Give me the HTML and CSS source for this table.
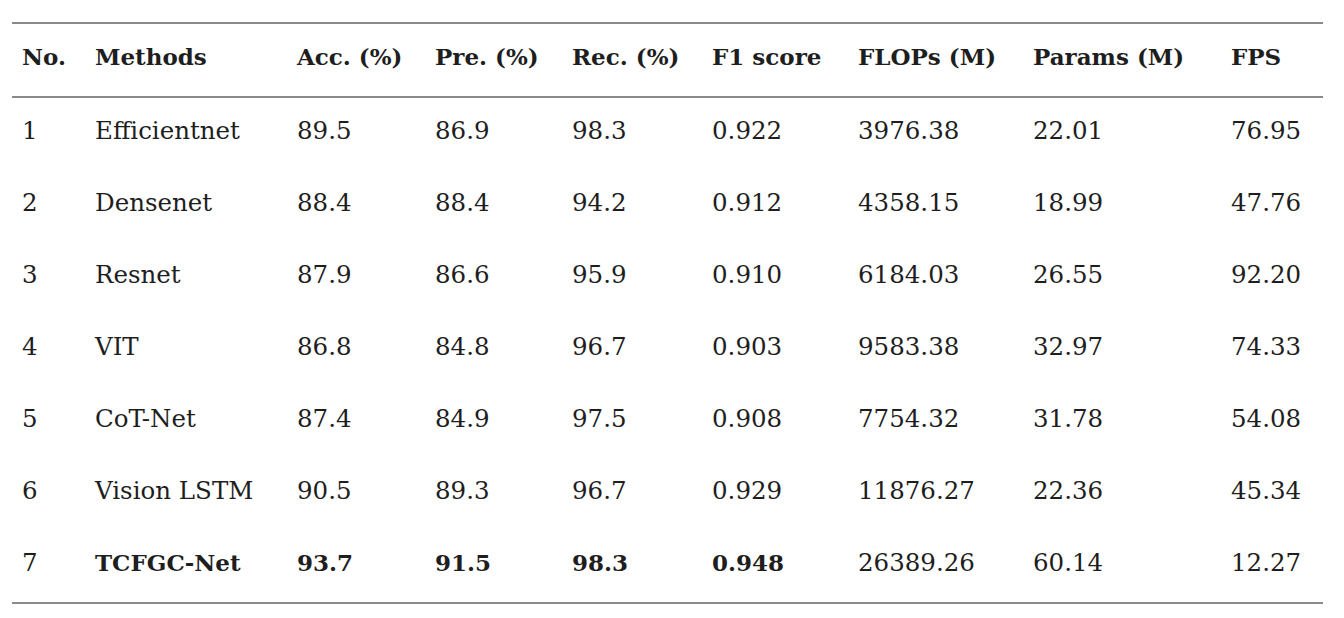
FILE: index.html
```html
<!DOCTYPE html>
<html>
<head>
<meta charset="utf-8">
<link rel="stylesheet" href="styles.css">
</head>
<body>
<table class="results">
  <colgroup>
    <col class="c1"><col class="c2"><col class="c3"><col class="c4"><col class="c5"><col class="c6"><col class="c7"><col class="c8"><col class="c9">
  </colgroup>
  <thead>
    <tr><th>No.</th><th>Methods</th><th>Acc. (%)</th><th>Pre. (%)</th><th>Rec. (%)</th><th>F1 score</th><th>FLOPs (M)</th><th>Params (M)</th><th>FPS</th></tr>
  </thead>
  <tbody>
    <tr><td>1</td><td>Efficientnet</td><td>89.5</td><td>86.9</td><td>98.3</td><td>0.922</td><td>3976.38</td><td>22.01</td><td>76.95</td></tr>
    <tr><td>2</td><td>Densenet</td><td>88.4</td><td>88.4</td><td>94.2</td><td>0.912</td><td>4358.15</td><td>18.99</td><td>47.76</td></tr>
    <tr><td>3</td><td>Resnet</td><td>87.9</td><td>86.6</td><td>95.9</td><td>0.910</td><td>6184.03</td><td>26.55</td><td>92.20</td></tr>
    <tr><td>4</td><td>VIT</td><td>86.8</td><td>84.8</td><td>96.7</td><td>0.903</td><td>9583.38</td><td>32.97</td><td>74.33</td></tr>
    <tr><td>5</td><td>CoT-Net</td><td>87.4</td><td>84.9</td><td>97.5</td><td>0.908</td><td>7754.32</td><td>31.78</td><td>54.08</td></tr>
    <tr><td>6</td><td>Vision LSTM</td><td>90.5</td><td>89.3</td><td>96.7</td><td>0.929</td><td>11876.27</td><td>22.36</td><td>45.34</td></tr>
    <tr><td>7</td><td class="b">TCFGC-Net</td><td class="b">93.7</td><td class="b">91.5</td><td class="b">98.3</td><td class="b">0.948</td><td>26389.26</td><td>60.14</td><td>12.27</td></tr>
  </tbody>
</table>
</body>
</html>
```
FILE: styles.css
```css
html, body {
  margin: 0;
  padding: 0;
  background: #ffffff;
}
body {
  padding: 22px 0 0 12px;
  font-family: "DejaVu Serif", serif;
  color: #1e1e1e;
}
.results {
  border-collapse: collapse;
  table-layout: fixed;
  width: 1311px;
  border-top: 2px solid #8a8a8a;
  border-bottom: 2px solid #8a8a8a;
  font-size: 24.5px;
}
.c1 { width: 73px; }
.c2 { width: 202px; }
.c3 { width: 138px; }
.c4 { width: 137px; }
.c5 { width: 140px; }
.c6 { width: 146px; }
.c7 { width: 175px; }
.c8 { width: 198px; }
.c9 { width: 102px; }
.results th, .results td {
  text-align: left;
  padding: 0 0 7px 10px;
  height: 65px;
  white-space: nowrap;
  vertical-align: middle;
}
.results th {
  font-weight: bold;
  font-size: 23px;
  border-bottom: 2px solid #8a8a8a;
}
.results td {
  font-weight: normal;
}
.results td.b {
  font-weight: bold;
  font-size: 23px;
}
```
